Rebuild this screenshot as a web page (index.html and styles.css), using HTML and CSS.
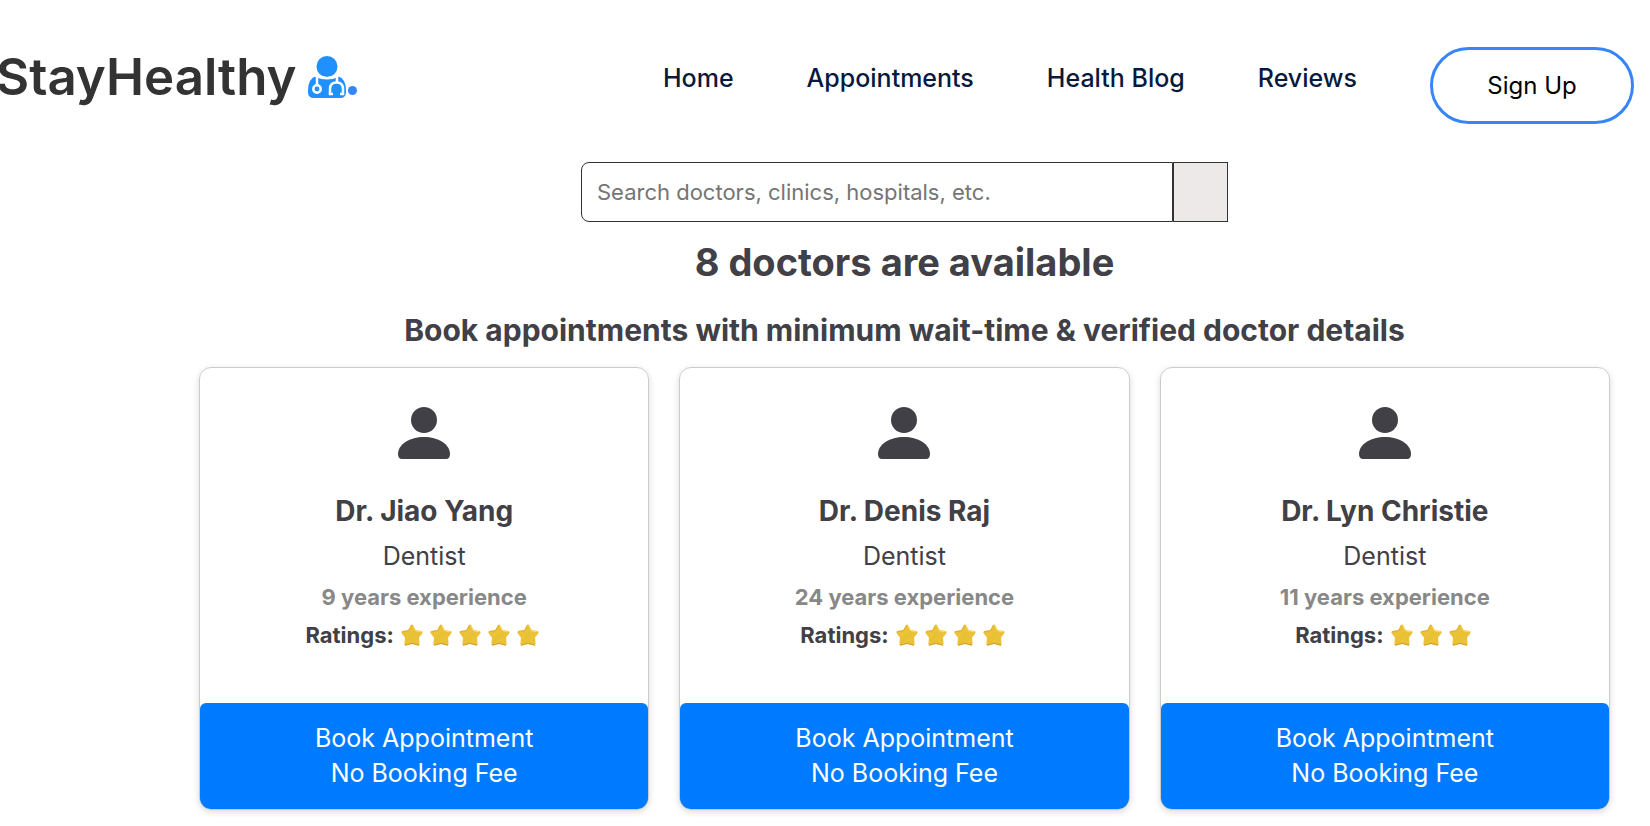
FILE: index.html
```html
<!DOCTYPE html>
<html lang="en">
<head>
<meta charset="utf-8">
<title>StayHealthy</title>
<link rel="stylesheet" href="styles.css">
</head>
<body>
<svg class="sprite" aria-hidden="true">
  <defs>
    <linearGradient id="gold" x1="0" y1="0" x2="1" y2="1">
      <stop offset="0" stop-color="#f7d04a"/>
      <stop offset="0.5" stop-color="#e8c034"/>
      <stop offset="1" stop-color="#f0c83a"/>
    </linearGradient>
    <symbol id="star" viewBox="0 0 22 22">
      <path d="M11 1.900 13.900 7.400 20.300 8.400 16.700 13.200 17.300 20.200 11 18.400 4.700 20.200 5.300 13.200 1.700 8.400 8.100 7.400Z" fill="url(#gold)" stroke="#ecc038" stroke-width="2.600" stroke-linejoin="round"/>
      <path d="M4 21.200 11 19.400 18 21.200" fill="none" stroke="#c99a26" stroke-width="0.900"/>
      <path d="M1.500 7.600 7.600 6.600 10.400 1.400" fill="none" stroke="#d9a92c" stroke-width="0.800"/>
      <path d="M12 2 14.600 6.800 20 7.800" fill="none" stroke="#fbe06c" stroke-width="0.900"/>
    </symbol>
    <symbol id="person" viewBox="0 0 54 54">
      <circle cx="27" cy="14" r="13"/>
      <path d="M27 31C41 31 53 38 53 48Q53 53 49 53H5Q1 53 1 48C1 38 13 31 27 31Z"/>
    </symbol>
  </defs>
</svg>

<header class="navbar">
  <a class="logo" href="#">StayHealthy
    <svg class="logo-icon" viewBox="0 0 38 42" aria-hidden="true">
      <circle cx="19" cy="10.500" r="10.500"/>
      <path d="M8 20Q13 23 19 23T30 20Q38 23 38 34V36Q38 42 32 42H6Q0 42 0 36V34Q0 23 8 20Z"/>
      <g class="cut">
        <path d="M7.500 19.500Q19 25 30.500 19.500"/>
        <path d="M9 20V30"/>
        <path d="M29 20V26"/>
        <circle cx="9" cy="33" r="3.700"/>
        <path d="M25 38H22V33Q22 26.500 28.500 26.500T35 33V38H32"/>
      </g>
    </svg><span class="dot"></span>
  </a>
  <nav class="links">
    <a href="#">Home</a>
    <a href="#">Appointments</a>
    <a href="#">Health Blog</a>
    <a href="#">Reviews</a>
    <button class="signup" type="button">Sign Up</button>
  </nav>
</header>

<main class="content">
  <form class="search">
    <input class="search-box" type="text" aria-label="Search doctors" placeholder="Search doctors, clinics, hospitals, etc.">
    <button class="search-btn" type="button" aria-label="Search"></button>
  </form>
  <h1 class="title">8 doctors are available</h1>
  <h2 class="subtitle">Book appointments with minimum wait-time &amp; verified doctor details</h2>

  <section class="cards">
    <article class="card">
      <svg class="avatar" aria-hidden="true"><use href="#person"/></svg>
      <h3 class="name">Dr. Jiao Yang</h3>
      <p class="role">Dentist</p>
      <p class="years">9 years experience</p>
      <p class="ratings">Ratings: <span class="stars"><svg><use href="#star"/></svg><svg><use href="#star"/></svg><svg><use href="#star"/></svg><svg><use href="#star"/></svg><svg><use href="#star"/></svg></span></p>
      <button class="book" type="button"><span>Book Appointment</span><span>No Booking Fee</span></button>
    </article>
    <article class="card">
      <svg class="avatar" aria-hidden="true"><use href="#person"/></svg>
      <h3 class="name">Dr. Denis Raj</h3>
      <p class="role">Dentist</p>
      <p class="years">24 years experience</p>
      <p class="ratings">Ratings: <span class="stars"><svg><use href="#star"/></svg><svg><use href="#star"/></svg><svg><use href="#star"/></svg><svg><use href="#star"/></svg></span></p>
      <button class="book" type="button"><span>Book Appointment</span><span>No Booking Fee</span></button>
    </article>
    <article class="card">
      <svg class="avatar" aria-hidden="true"><use href="#person"/></svg>
      <h3 class="name">Dr. Lyn Christie</h3>
      <p class="role">Dentist</p>
      <p class="years">11 years experience</p>
      <p class="ratings">Ratings: <span class="stars"><svg><use href="#star"/></svg><svg><use href="#star"/></svg><svg><use href="#star"/></svg></span></p>
      <button class="book" type="button"><span>Book Appointment</span><span>No Booking Fee</span></button>
    </article>
  </section>
</main>
</body>
</html>
```
FILE: styles.css
```css
* { box-sizing: border-box; }

body {
  margin: 0;
  background: #fff;
  color: #414046;
  font-family: Inter, "Open Sans", sans-serif;
}

h1, h2, h3, p { margin: 0; }

button, input { font-family: inherit; }

.sprite { position: absolute; width: 0; height: 0; }

.navbar {
  display: flex;
  justify-content: space-between;
  align-items: flex-start;
  padding: 47px 16px 0 0;
  height: 162px;
}

.logo {
  display: flex;
  align-items: baseline;
  margin-left: -4px;
  color: #333;
  font-size: 51px;
  font-weight: 600;
  line-height: 60px;
  text-decoration: none;
}

.logo-icon {
  width: 38px;
  height: 42px;
  margin-left: 11px;
  align-self: center;
  fill: #2190ff;
}

.cut { fill: none; stroke: #fff; stroke-width: 2.5; }

.dot {
  width: 9px;
  height: 9px;
  margin-left: 2px;
  border-radius: 50%;
  background: #3685fb;
}

.links {
  display: flex;
  align-items: flex-start;
  gap: 73px;
}

.links a {
  color: #08193e;
  font-size: 25px;
  font-weight: 500;
  line-height: 63px;
  text-decoration: none;
}

.signup {
  width: 204px;
  height: 77px;
  border: 3px solid #3685fb;
  border-radius: 39px;
  background: #fff;
  color: #000;
  font-size: 24px;
}

.content { padding: 0 40px 16px 199px; }

.search {
  display: flex;
  width: 647px;
  margin: 0 auto;
}

.search-box {
  flex: 1;
  height: 60px;
  padding: 0 15px;
  border: 1px solid #333;
  border-radius: 8px 0 0 8px;
  font-size: 22px;
}

.search-box::placeholder { color: #757575; }

.search-btn {
  width: 55px;
  border: 1px solid #333;
  background: #eee9e9;
}

.title {
  margin-top: 12px;
  font-size: 38px;
  line-height: 56px;
  text-align: center;
}

.subtitle {
  margin-top: 20px;
  font-size: 30px;
  line-height: 40px;
  text-align: center;
}

.cards {
  display: grid;
  grid-template-columns: repeat(3, 1fr);
  gap: 30px;
  margin-top: 17px;
}

.card {
  display: flex;
  flex-direction: column;
  align-items: center;
  padding-top: 38px;
  border: 1px solid #ccc;
  border-radius: 12px;
  box-shadow: 0 2px 6px rgba(0, 0, 0, 0.15);
}

.avatar { width: 54px; height: 54px; fill: #414046; }

.name { margin-top: 30px; font-size: 28px; line-height: 42px; }

.role { margin-top: 6px; font-size: 25px; line-height: 36px; }

.years {
  margin-top: 6px;
  color: #888;
  font-size: 22px;
  font-weight: 700;
  line-height: 34px;
}

.ratings {
  display: flex;
  align-items: center;
  gap: 7px;
  margin-top: 4px;
  font-size: 22px;
  font-weight: 700;
  line-height: 34px;
}

.stars { display: flex; gap: 7px; padding-right: 4px; }

.stars svg { width: 22px; height: 22px; }

.book {
  display: flex;
  flex-direction: column;
  align-items: center;
  width: 100%;
  margin-top: 51px;
  padding: 18px 0;
  border: 0;
  border-radius: 6px 6px 11px 11px;
  background: #007bff;
  color: #fff;
  font-size: 25px;
  line-height: 35px;
}
```
